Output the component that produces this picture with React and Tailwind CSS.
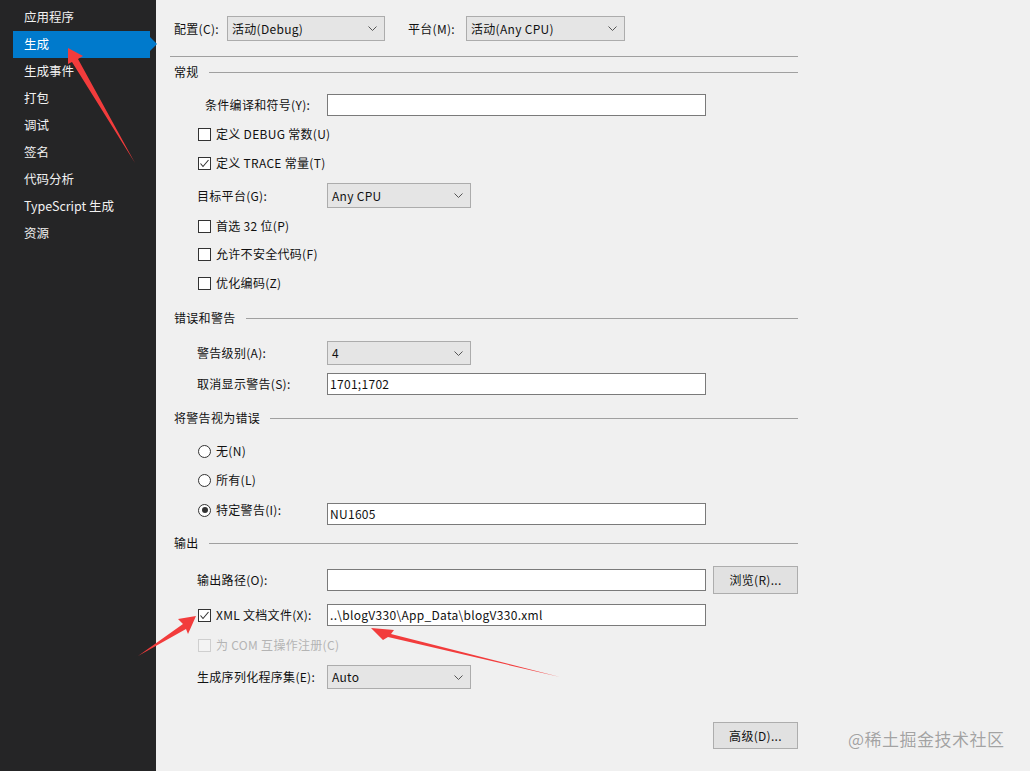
import React from 'react';

const navItems = ['应用程序', '生成', '生成事件', '打包', '调试', '签名', '代码分析', 'TypeScript 生成', '资源'];

const Chevron = () => (
  <svg width="9" height="5" viewBox="0 0 9 5" className="shrink-0">
    <polyline points="0.5,0.5 4.5,4.5 8.5,0.5" fill="none" stroke="#555" strokeWidth="1" />
  </svg>
);

const Combo = ({ text, w = 'w-[144px]', h = 'h-[25px]' }) => (
  <div className={`${w} ${h} flex items-center justify-between bg-[#e5e5e5] border border-[#acacac] pl-[4px] pr-[7px]`}>
    <span>{text}</span>
    <Chevron />
  </div>
);

const TextBox = ({ text = '' }) => (
  <div className="w-[379px] h-[22px] flex items-center bg-white border border-[#7a7a7a] pl-[2px]">
    {text}
  </div>
);

const Button = ({ children, h = 'h-[28px]' }) => (
  <div className={`w-[85px] ${h} flex items-center justify-center bg-[#e1e1e1] border border-[#adadad]`}>
    {children}
  </div>
);

const Header = ({ children, mt }) => (
  <div className={`${mt} h-[20px] flex items-center`}>
    <span>{children}</span>
    <div className="flex-1 h-px bg-[#a0a0a0] ml-[10px]" />
  </div>
);

const CheckBox = ({ checked, disabled }) => (
  <div className={`w-[13px] h-[13px] shrink-0 border flex items-center justify-center ${disabled ? 'border-[#cfcfcf] bg-[#f3f3f3]' : 'border-[#333] bg-white'}`}>
    {checked && (
      <svg width="11" height="11" viewBox="0 0 11 11">
        <polyline points="1.5,5.5 4,8.5 9.5,2" fill="none" stroke="#333" strokeWidth="1.1" />
      </svg>
    )}
  </div>
);

const Check = ({ label, checked, disabled, mt }) => (
  <div className={`${mt} h-[20px] flex items-center pl-[24px] gap-[5px] ${disabled ? 'text-[#b4b4b4]' : ''}`}>
    <CheckBox checked={checked} disabled={disabled} />
    <span>{label}</span>
  </div>
);

const Radio = ({ label, checked }) => (
  <div className="flex items-center gap-[5px]">
    <div className="w-[13px] h-[13px] rounded-full border border-[#333] bg-white flex items-center justify-center">
      {checked && <div className="w-[6px] h-[6px] rounded-full bg-[#333]" />}
    </div>
    <span>{label}</span>
  </div>
);

const FieldRow = ({ label, mt, h, pl = 'pl-[23px]', children }) => (
  <div className={`${mt} ${h} flex items-center`}>
    <div className={`w-[153px] ${pl}`}>{label}</div>
    {children}
  </div>
);

export default function App() {
  return (
    <div className="relative w-[1030px] h-[771px] flex overflow-hidden text-[12px] leading-none text-[#111] font-['Segoe_UI','Noto_Sans_CJK_SC',sans-serif]">
      {/* sidebar */}
      <div className="w-[156px] shrink-0 bg-[#252526] text-[#f1f1f1] pt-[4px] text-[12.5px]">
        {navItems.map((item) => (
          <div
            key={item}
            className={`relative ml-[13px] w-[137px] h-[27px] flex items-center pl-[11px] ${item === '生成' ? 'bg-[#007acc] text-white' : ''}`}
          >
            {item}
            {item === '生成' && (
              <div className="absolute right-[-7px] top-[6px] w-0 h-0 border-y-[7px] border-y-transparent border-l-[7px] border-l-[#007acc]" />
            )}
          </div>
        ))}
      </div>

      {/* main */}
      <div className="flex-1 bg-[#f0f0f0] pl-[18px] pt-[16px] tracking-[0.3px]">
        <div className="w-[624px] flex flex-col">
          <div className="h-[25px] flex items-center">
            <span className="w-[53px]">配置(C):</span>
            <Combo text="活动(Debug)" w="w-[158px]" />
            <span className="w-[58px] ml-[23px]">平台(M):</span>
            <Combo text="活动(Any CPU)" w="w-[159px]" />
          </div>
          <div className="mt-[15px] -ml-[4px] h-px bg-[#a0a0a0]" />

          <Header mt="mt-[5px]">常规</Header>
          <FieldRow label="条件编译和符号(Y):" mt="mt-[12px]" h="h-[22px]" pl="pl-[31px]">
            <TextBox />
          </FieldRow>
          <Check mt="mt-[8px]" label="定义 DEBUG 常数(U)" />
          <Check mt="mt-[9px]" label="定义 TRACE 常量(T)" checked />
          <FieldRow label="目标平台(G):" mt="mt-[10px]" h="h-[25px]">
            <Combo text="Any CPU" />
          </FieldRow>
          <Check mt="mt-[8px]" label="首选 32 位(P)" />
          <Check mt="mt-[8px]" label="允许不安全代码(F)" />
          <Check mt="mt-[9px]" label="优化编码(Z)" />

          <Header mt="mt-[15px]">错误和警告</Header>
          <FieldRow label="警告级别(A):" mt="mt-[13px]" h="h-[24px]">
            <Combo text="4" h="h-[24px]" />
          </FieldRow>
          <FieldRow label="取消显示警告(S):" mt="mt-[8px]" h="h-[22px]">
            <TextBox text="1701;1702" />
          </FieldRow>

          <Header mt="mt-[13px]">将警告视为错误</Header>
          <div className="mt-[13px] h-[20px] flex items-center pl-[24px]">
            <Radio label="无(N)" />
          </div>
          <div className="mt-[9px] h-[20px] flex items-center pl-[24px]">
            <Radio label="所有(L)" />
          </div>
          <div className="mt-[13px] h-[22px] flex items-center">
            <div className="w-[153px] pl-[24px] pb-[8px]">
              <Radio label="特定警告(I):" checked />
            </div>
            <TextBox text="NU1605" />
          </div>

          <Header mt="mt-[8px]">输出</Header>
          <FieldRow label="输出路径(O):" mt="mt-[13px]" h="h-[28px]">
            <TextBox />
            <div className="ml-[7px]">
              <Button>浏览(R)...</Button>
            </div>
          </FieldRow>
          <div className="mt-[10px] h-[22px] flex items-center">
            <div className="w-[153px] pl-[24px] flex items-center gap-[5px]">
              <CheckBox checked />
              <span>XML 文档文件(X):</span>
            </div>
            <TextBox text="..\blogV330\App_Data\blogV330.xml" />
          </div>
          <Check mt="mt-[9px]" label="为 COM 互操作注册(C)" disabled />
          <FieldRow label="生成序列化程序集(E):" mt="mt-[10px]" h="h-[24px]">
            <Combo text="Auto" h="h-[24px]" />
          </FieldRow>

          <div className="mt-[33px] flex justify-end">
            <Button h="h-[27px]">高级(D)...</Button>
          </div>
        </div>
      </div>

      {/* watermark */}
      <div className="absolute left-[848px] top-[730px] text-[17px] text-[#a3a3a3] tracking-[0.5px] [text-shadow:0_0_1px_#fff]">
        @稀土掘金技术社区
      </div>

      {/* annotation arrows */}
      <svg className="absolute inset-0 pointer-events-none" width="1030" height="771" viewBox="0 0 1030 771">
        <polygon points="68,48 83,56 78,59 135,163 72,62 68,64" fill="#f23c3c" />
        <polygon points="196,616 178,619 183,624 138,656 186,629 188,634" fill="#f23c3c" />
        <polygon points="371,628 394,630 391,634 560,677 388,637 383,640" fill="#f23c3c" />
      </svg>
    </div>
  );
}
